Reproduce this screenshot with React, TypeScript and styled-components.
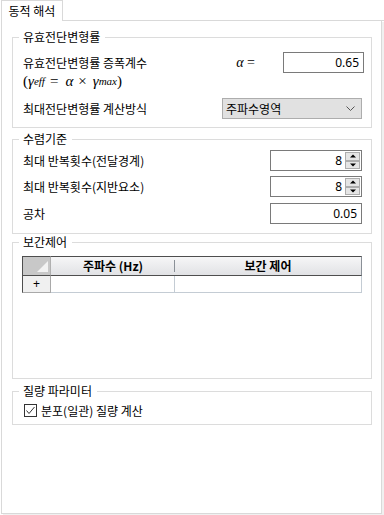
import React from 'react';
import styled, { createGlobalStyle } from 'styled-components';

const Global = createGlobalStyle`
  html, body { margin: 0; padding: 0; background: #ffffff; }
  body {
    font-family: "Noto Sans CJK KR", "Noto Sans", sans-serif;
    font-size: 12px;
    color: #000;
  }
  * { box-sizing: border-box; }
`;

const Page = styled.div`
  width: 384px;
  height: 515px;
  padding: 0 0 1px 1px;
  display: flex;
  flex-direction: column;
  background: #ffffff;
`;

const TabStrip = styled.div`
  display: flex;
  height: 21px;
  flex: none;
`;

const Tab = styled.div`
  width: 62px;
  height: 21px;
  border: 1px solid #d9d9d9;
  border-bottom: none;
  display: flex;
  align-items: center;
  justify-content: center;
  font-size: 12px;
  line-height: 14px;
  padding-bottom: 1px;
  background: #fff;
`;

const TabFiller = styled.div`
  flex: 1;
  border-bottom: 1px solid #d9d9d9;
`;

const Panel = styled.div`
  width: 381px;
  flex: 1;
  border: 1px solid #d9d9d9;
  border-top: none;
  padding: 0 0 0 10px;
  display: flex;
  flex-direction: column;
  box-shadow: 2px 1px 0 #f0f0f0;
`;

const Group = styled.fieldset<{ $mt: number; $pt: number; $pb: number }>`
  width: 360px;
  min-width: 0;
  margin: ${(p) => p.$mt}px 0 0 0;
  padding: ${(p) => p.$pt}px 9px ${(p) => p.$pb}px 10px;
  border: 1px solid #dcdcdc;
  display: flex;
  flex-direction: column;
`;

const Legend = styled.legend`
  margin-left: -4px;
  padding: 0 5px 0 4px;
  font-size: 12px;
  line-height: 14px;
`;

const Row = styled.div<{ $mt?: number }>`
  display: flex;
  align-items: center;
  height: 21px;
  margin-top: ${(p) => p.$mt ?? 0}px;
`;

const Label = styled.span`
  flex: 1;
  font-size: 12px;
  line-height: 14px;
  white-space: nowrap;
`;

const AlphaSign = styled.span`
  font-family: "Liberation Serif", "DejaVu Serif", serif;
  font-size: 14px;
  margin-right: 28px;
  white-space: pre;
  i { font-style: italic; }
`;

const NumberBox = styled.div<{ $w: number; $mr?: number }>`
  width: ${(p) => p.$w}px;
  height: 21px;
  margin-right: ${(p) => p.$mr ?? 0}px;
  border: 1px solid #7a7a7a;
  background: #fff;
  display: flex;
  align-items: center;
  justify-content: flex-end;
  padding-right: 4px;
  font-family: "Noto Sans", "Liberation Sans", sans-serif;
  font-size: 12px;
  line-height: 16px;
`;

const MathLine = styled.div`
  height: 16px;
  display: flex;
  align-items: center;
  font-family: "Liberation Serif", "DejaVu Serif", serif;
  font-size: 15px;
  white-space: pre;
  i { font-style: italic; }
  sub { font-size: 11px; font-style: italic; vertical-align: -3px; line-height: 0; }
`;

const Op = styled.span<{ $l: number; $r: number }>`
  padding: 0 ${(p) => p.$r}px 0 ${(p) => p.$l}px;
`;

const Combo = styled.div`
  width: 140px;
  height: 21px;
  border: 1px solid #adadad;
  background: #e1e1e1;
  display: flex;
  align-items: center;
  justify-content: space-between;
  padding: 0 6px 0 3px;
  font-size: 12px;
  line-height: 14px;
`;

const Spin = styled.div`
  width: 92px;
  height: 21px;
  display: flex;
`;

const SpinField = styled.div`
  flex: 1;
  border: 1px solid #7a7a7a;
  border-right: none;
  background: #fff;
  display: flex;
  align-items: center;
  justify-content: flex-end;
  padding-right: 3px;
  font-family: "Noto Sans", "Liberation Sans", sans-serif;
  font-size: 12px;
  line-height: 16px;
`;

const SpinButtons = styled.div`
  width: 17px;
  height: 21px;
  border: 1px solid #7a7a7a;
  border-left: none;
  display: flex;
  flex-direction: column;
  background: #fff;
  padding: 1px 1px 1px 0;
`;

const SpinButton = styled.div`
  flex: 1;
  border: 1px solid #adadad;
  background: #e5e5e5;
  display: flex;
  align-items: center;
  justify-content: center;
`;

const Table = styled.div`
  width: 340px;
  margin-left: -1px;
  display: grid;
  grid-template-columns: 29px 124px 187px;
  grid-template-rows: 20px 17px;
`;

const Corner = styled.div`
  background: #c8c8c8;
  border-top: 1px solid #4e4e4e;
  border-bottom: 1px solid #4e4e4e;
  border-left: 1px solid #4e4e4e;
  border-right: 1px solid #b0b0b0;
  display: flex;
  align-items: flex-end;
  justify-content: flex-end;
  padding: 0 2px 3px 0;
`;

const HeadCell = styled.div<{ $last?: boolean }>`
  position: relative;
  background: linear-gradient(#f6f6f7, #e1e2e5);
  border-top: 1px solid #4e4e4e;
  border-bottom: 1px solid #4e4e4e;
  border-right: ${(p) => (p.$last ? '1px solid #8a9097' : 'none')};
  display: flex;
  align-items: center;
  justify-content: center;
  font-weight: 700;
  font-size: 12px;
  line-height: 14px;
  &::after {
    content: '';
    display: ${(p) => (p.$last ? 'none' : 'block')};
    position: absolute;
    right: 0;
    top: 3px;
    bottom: 3px;
    width: 1px;
    background: #8a9097;
  }
`;

const RowHead = styled.div`
  background: #f0f0f0;
  border-left: 1px solid #4e4e4e;
  border-right: 1px solid #a9a9a9;
  border-bottom: 1px solid #a9a9a9;
  display: flex;
  align-items: center;
  justify-content: center;
  font-family: "Liberation Sans", sans-serif;
  font-size: 12px;
  line-height: 14px;
`;

const DataCell = styled.div`
  background: #fff;
  border-right: 1px solid #c4ccd4;
  border-bottom: 1px solid #c4ccd4;
`;

const CheckRow = styled.label`
  display: flex;
  align-items: center;
  height: 13px;
  margin-left: 1px;
  gap: 4px;
  font-size: 12px;
  line-height: 14px;
`;

const CheckBox = styled.span`
  width: 13px;
  height: 13px;
  border: 1px solid #333;
  background: #fff;
  display: flex;
  align-items: center;
  justify-content: center;
`;

const Chevron = () => (
  <svg width="9" height="5" viewBox="0 0 9 5">
    <path d="M0.5 0.5 L4.5 4.5 L8.5 0.5" fill="none" stroke="#555" strokeWidth="1" />
  </svg>
);

const Up = () => (
  <svg width="6" height="4" viewBox="0 0 6 4">
    <path d="M0 3.5 L3 0.5 L6 3.5 Z" fill="#000" />
  </svg>
);

const Down = () => (
  <svg width="6" height="4" viewBox="0 0 6 4">
    <path d="M0 0.5 L6 0.5 L3 3.5 Z" fill="#000" />
  </svg>
);

const SpinBox: React.FC<{ value: string }> = ({ value }) => (
  <Spin>
    <SpinField>{value}</SpinField>
    <SpinButtons>
      <SpinButton><Up /></SpinButton>
      <SpinButton><Down /></SpinButton>
    </SpinButtons>
  </Spin>
);

export default function App() {
  return (
    <>
      <Global />
      <Page>
        <TabStrip>
          <Tab>동적 해석</Tab>
          <TabFiller />
        </TabStrip>
        <Panel>
          <Group $mt={9} $pt={8} $pb={8}>
            <Legend>유효전단변형률</Legend>
            <Row>
              <Label>유효전단변형률 증폭계수</Label>
              <AlphaSign><i>α</i> =</AlphaSign>
              <NumberBox $w={81} $mr={-2}>0.65</NumberBox>
            </Row>
            <MathLine>
              (<i>γ</i><sub>eff</sub><Op $l={5} $r={7}>=</Op><i>α</i><Op $l={5} $r={6}>×</Op><i>γ</i><sub>max</sub>)
            </MathLine>
            <Row $mt={9}>
              <Label>최대전단변형률 계산방식</Label>
              <Combo>
                <span>주파수영역</span>
                <Chevron />
              </Combo>
            </Row>
          </Group>

          <Group $mt={4} $pt={4} $pb={9}>
            <Legend>수렴기준</Legend>
            <Row>
              <Label>최대 반복횟수(전달경계)</Label>
              <SpinBox value="8" />
            </Row>
            <Row $mt={5}>
              <Label>최대 반복횟수(지반요소)</Label>
              <SpinBox value="8" />
            </Row>
            <Row $mt={6}>
              <Label>공차</Label>
              <NumberBox $w={92}>0.05</NumberBox>
            </Row>
          </Group>

          <Group $mt={1} $pt={7} $pb={85}>
            <Legend>보간제어</Legend>
            <Table>
              <Corner>
                <svg width="11" height="11" viewBox="0 0 11 11">
                  <path d="M11 0 L11 11 L0 11 Z" fill="#f2f2f2" />
                </svg>
              </Corner>
              <HeadCell>주파수 (Hz)</HeadCell>
              <HeadCell $last>보간 제어</HeadCell>
              <RowHead>+</RowHead>
              <DataCell />
              <DataCell />
            </Table>
          </Group>

          <Group $mt={5} $pt={6} $pb={7}>
            <Legend>질량 파라미터</Legend>
            <CheckRow>
              <CheckBox>
                <svg width="11" height="11" viewBox="0 0 11 11">
                  <path d="M1.5 5.5 L4 8.5 L9.5 2" fill="none" stroke="#333" strokeWidth="1" />
                </svg>
              </CheckBox>
              <span>분포(일관) 질량 계산</span>
            </CheckRow>
          </Group>
        </Panel>
      </Page>
    </>
  );
}
